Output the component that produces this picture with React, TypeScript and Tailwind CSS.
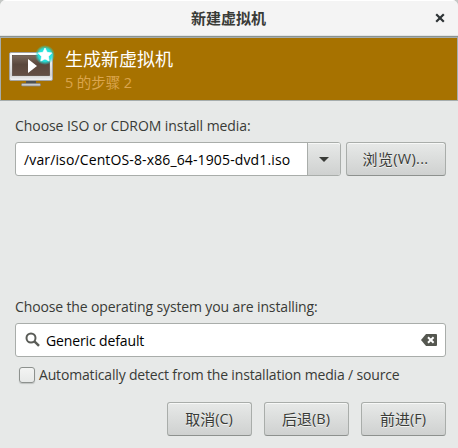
import type { ReactNode } from 'react';

function Label({ children, className = '' }: { children: ReactNode; className?: string }) {
  return <span className={`block whitespace-nowrap text-[14px] leading-5 ${className}`}>{children}</span>;
}

function Button({ han, latin, className = '' }: { han: string; latin: string; className?: string }) {
  return (
    <button
      type="button"
      className={`flex h-[34px] items-center justify-center whitespace-nowrap rounded-[3px] border border-[#a9adaa] border-b-[#8d918e] bg-linear-to-b from-[#e7e9e8] to-[#cfd1d0] pr-px shadow-[inset_0_1px_#f7f8f7] [text-shadow:0_1px_#f2f3f2] ${className}`}
    >
      <span className="text-[15px] leading-5">{han}</span>
      <span className="text-[14.5px] leading-5">{latin}</span>
    </button>
  );
}

function Monitor() {
  return (
    <svg width="48" height="48" viewBox="0 0 48 48" className="shrink-0">
      <defs>
        <linearGradient id="frame" x1="0" y1="0" x2="0" y2="1">
          <stop offset="0" stopColor="#fff" />
          <stop offset=".8" stopColor="#d2d2d2" />
          <stop offset="1" stopColor="#f4f4f4" />
        </linearGradient>
        <linearGradient id="screen" x1="0" y1="0" x2="0" y2="1">
          <stop offset="0" stopColor="#7a685c" />
          <stop offset=".45" stopColor="#5a483d" />
          <stop offset="1" stopColor="#654f43" />
        </linearGradient>
        <radialGradient id="glow">
          <stop offset="0" stopColor="#20f4ee" />
          <stop offset=".65" stopColor="#20e4de" stopOpacity=".95" />
          <stop offset="1" stopColor="#20d4cf" stopOpacity="0" />
        </radialGradient>
      </defs>
      <path d="M19 35h10v4h-10z" fill="#4d5052" />
      <rect x="14.5" y="38.5" width="19" height="2.5" rx="1" fill="#c9cbcc" stroke="#858585" strokeWidth=".8" />
      <rect x="2.5" y="7.5" width="43" height="28" rx="1.5" fill="url(#frame)" stroke="#a4a4a4" />
      <rect x="5.5" y="10.5" width="37" height="20" fill="url(#screen)" stroke="#5b4c43" strokeWidth=".8" />
      <path d="M21 14v14l9-7z" fill="#fff" />
      <circle cx="38" cy="10" r="10" fill="url(#glow)" />
      <path d="M38 3l2.1 4.3 4.7.7-3.4 3.4.8 4.7-4.2-2.2-4.2 2.2.8-4.7-3.4-3.4 4.7-.7z" fill="#fff" stroke="#fff" strokeWidth=".7" strokeLinejoin="round" />
    </svg>
  );
}

export default function App() {
  return (
    <div className="h-[448px] w-[458px] overflow-hidden bg-[#c5c8c6] font-['Open_Sans','Noto_Sans_CJK_SC',sans-serif] text-[#393b37]">
      <div className="flex h-full flex-col overflow-hidden rounded-t-[6px] bg-[#e7e9e8]">
        <header className="grid h-[37px] shrink-0 grid-cols-[36px_1fr_36px] items-center border-b border-[#8a9290] bg-[#f4f4f4] shadow-[inset_0_1px_#fff,inset_0_-1px_#e2e4e3]">
          <span />
          <h1 className="pr-px text-center font-['Noto_Sans_CJK_SC',sans-serif] text-[15px] font-bold leading-5">新建虚拟机</h1>
          <button type="button" aria-label="关闭" className="flex justify-center">
            <svg width="10" height="10" viewBox="0 0 10 10" stroke="#2e3436" strokeWidth="2.2">
              <path d="M1.2 1.2l7.6 7.6M8.8 1.2L1.2 8.8" />
            </svg>
          </button>
        </header>
        <section className="flex h-16 shrink-0 border border-[#a6adad] bg-[#a77200] pl-[6px] pt-[7px] font-['Noto_Sans_CJK_SC',sans-serif]">
          <Monitor />
          <div className="pl-[10px]">
            <h2 className="text-[18px] leading-[26px] text-white">生成新虚拟机</h2>
            <p className="pt-px font-['Open_Sans','Noto_Sans_CJK_SC',sans-serif] text-[14.5px] leading-[22px] tracking-[-0.1px] text-[#dba54d]">5 的步骤 2</p>
          </div>
        </section>
        <main className="flex flex-1 flex-col px-[15px] pr-3 pt-[15px]">
          <Label className="tracking-[-0.06px]">Choose ISO or CDROM install media:</Label>
          <div className="mt-[6px] flex gap-[5px]">
            <div className="flex h-[34px] w-[326px] rounded-[3px] border border-[#a9adaa] bg-white">
              <div className="flex flex-1 items-center pl-2 pt-[2px] text-black">
                <Label className="tracking-[0.13px]">/var/iso/CentOS-8-x86_64-1905-dvd1.iso</Label>
              </div>
              <button type="button" aria-label="展开" className="flex w-[33px] items-center justify-center rounded-r-[2px] border-l border-[#a9adaa] bg-linear-to-b from-[#e7e9e8] to-[#cfd1d0] shadow-[inset_0_1px_#f7f8f7]">
                <svg width="10" height="5" viewBox="0 0 10 5"><path d="M0 0h10L5 5z" fill="#393b37" /></svg>
              </button>
            </div>
            <Button han="浏览" latin="(W)..." className="w-[100px] tracking-[0.3px]" />
          </div>
          <Label className="mt-[121px] tracking-[-0.13px]">Choose the operating system you are installing:</Label>
          <div className="mt-[6px] flex h-[34px] items-center rounded-[3px] border border-[#a9adaa] bg-white pl-[9px] pr-2 text-black">
            <svg width="16" height="16" viewBox="0 0 16 16" fill="none" stroke="#5a5c57">
              <circle cx="6" cy="6" r="4.5" strokeWidth="2" />
              <path d="M9.2 9.2l4.8 4.6" strokeWidth="2.5" />
            </svg>
            <Label className="ml-[5px] flex-1 pt-[2px] tracking-[-0.13px]">Generic default</Label>
            <svg width="16" height="12" viewBox="0 0 16 12">
              <path d="M5 0h10q1 0 1 1v10q0 1-1 1H5L0 6z" fill="#555750" />
              <path d="M7 3.2l5.6 5.6M12.6 3.2L7 8.8" stroke="#fff" strokeWidth="2" />
            </svg>
          </div>
          <div className="mt-2 flex items-center gap-1 pl-1">
            <span className="h-4 w-4 rounded-[3px] border border-[#8d918e] bg-linear-to-b from-[#f3f4f3] to-[#e7e9e8] shadow-[0_1px_1px_#bfc2c0]" />
            <Label className="tracking-[-0.17px]">Automatically detect from the installation media / source</Label>
          </div>
          <div className="mt-[17px] flex justify-end gap-3">
            <Button han="取消" latin="(C)" className="w-[85px]" />
            <Button han="后退" latin="(B)" className="w-[85px]" />
            <Button han="前进" latin="(F)" className="w-[85px]" />
          </div>
        </main>
      </div>
    </div>
  );
}
